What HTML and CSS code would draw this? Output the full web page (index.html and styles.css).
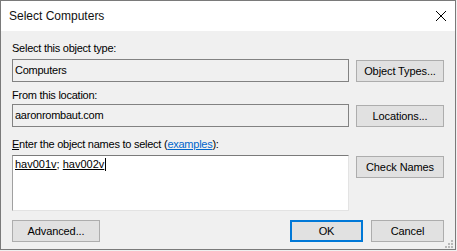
FILE: index.html
```html
<!DOCTYPE html>
<html>
<head>
<meta charset="utf-8">
<link rel="stylesheet" href="styles.css">
</head>
<body>
<div class="window">
  <div class="titlebar">
    <span class="title">Select Computers</span>
    <svg class="close" width="10" height="10" viewBox="0 0 10 10"><path d="M0 0 L10 10 M10 0 L0 10" stroke="#000" stroke-width="1" fill="none"/></svg>
  </div>
  <div class="content">
    <div class="label l1">Select this object type:</div>
    <div class="row">
      <div class="field">Computers</div>
      <button class="btn">Object Types...</button>
    </div>
    <div class="label l2">From this location:</div>
    <div class="row">
      <div class="field">aaronrombaut.com</div>
      <button class="btn">Locations...</button>
    </div>
    <div class="label l3"><u>E</u>nter the object names to select (<a class="link">examples</a>):</div>
    <div class="row">
      <div class="names"><span class="name">hav001v</span>; <span class="name">hav002v</span><span class="caret"></span></div>
      <button class="btn">Check Names</button>
    </div>
    <div class="footer">
      <button class="btn adv">Advanced...</button>
      <div class="actions">
        <button class="btn small ok">OK</button>
        <button class="btn small">Cancel</button>
      </div>
    </div>
  </div>
  <svg class="grip" width="8" height="8" viewBox="0 0 8 8">
    <g fill="#b9b9b9">
      <rect x="6" y="0" width="2" height="2"/>
      <rect x="3" y="3" width="2" height="2"/>
      <rect x="6" y="3" width="2" height="2"/>
      <rect x="0" y="6" width="2" height="2"/>
      <rect x="3" y="6" width="2" height="2"/>
      <rect x="6" y="6" width="2" height="2"/>
    </g>
  </svg>
</div>
</body>
</html>
```

FILE: styles.css
```css
html, body {
  margin: 0;
  padding: 0;
  background: #f0f0f0;
}
body {
  font-family: "Liberation Sans", Arial, sans-serif;
  font-size: 11px;
  color: #000;
}
.window {
  position: relative;
  width: 456px;
  height: 250px;
  box-sizing: border-box;
  border: 1px solid #7a7a7a;
  background: #f0f0f0;
  display: flex;
  flex-direction: column;
}
.titlebar {
  height: 30px;
  background: #fff;
  display: flex;
  align-items: center;
  justify-content: space-between;
  padding: 0 9px 0 8px;
}
.title {
  font-size: 12px;
  line-height: 16px;
  color: #111;
}
.close {
  display: block;
}
.content {
  padding: 11px 11px 0 11px;
}
.label {
  line-height: 13px;
  height: 13px;
  white-space: nowrap;
  letter-spacing: -0.25px;
}
.l1 { margin-bottom: 4px; }
.l2 { margin-top: 7px; margin-bottom: 2px; }
.l3 { margin-top: 11px; margin-bottom: 4px; }
.link {
  color: #0066cc;
  text-decoration: underline;
}
.row {
  display: grid;
  grid-template-columns: 337px 88px;
  column-gap: 7px;
  align-items: start;
}
.field {
  height: 23px;
  box-sizing: border-box;
  border: 1px solid #828282;
  background: #f0f0f0;
  padding-left: 2px;
  line-height: 21px;
  letter-spacing: -0.25px;
}
.names {
  height: 56px;
  box-sizing: border-box;
  background: #fff;
  border-top: 1px solid #7a7a7a;
  border-left: 1px solid #a0a0a0;
  border-right: 1px solid #e3e3e3;
  border-bottom: 1px solid #e3e3e3;
  padding: 2px 2px;
  line-height: 13px;
  white-space: nowrap;
}
.name {
  text-decoration: underline;
}
.caret {
  display: inline-block;
  width: 1px;
  height: 13px;
  background: #000;
  vertical-align: top;
  margin-left: 1px;
}
.btn {
  height: 22px;
  box-sizing: border-box;
  margin: 1px 0 0 0;
  padding: 0;
  border: 1px solid #adadad;
  background: #e1e1e1;
  font-family: "Liberation Sans", Arial, sans-serif;
  font-size: 11px;
  letter-spacing: -0.1px;
  color: #000;
  line-height: 20px;
  text-align: center;
  width: 88px;
}
.footer {
  margin-top: 9px;
  display: flex;
  justify-content: space-between;
  align-items: flex-start;
}
.footer .btn {
  margin-top: 0;
}
.actions {
  display: flex;
  gap: 8px;
}
.small {
  width: 73px;
}
.ok {
  border: 2px solid #0078d7;
  line-height: 18px;
}
.grip {
  position: absolute;
  right: 2px;
  bottom: 1px;
  display: block;
}
```
